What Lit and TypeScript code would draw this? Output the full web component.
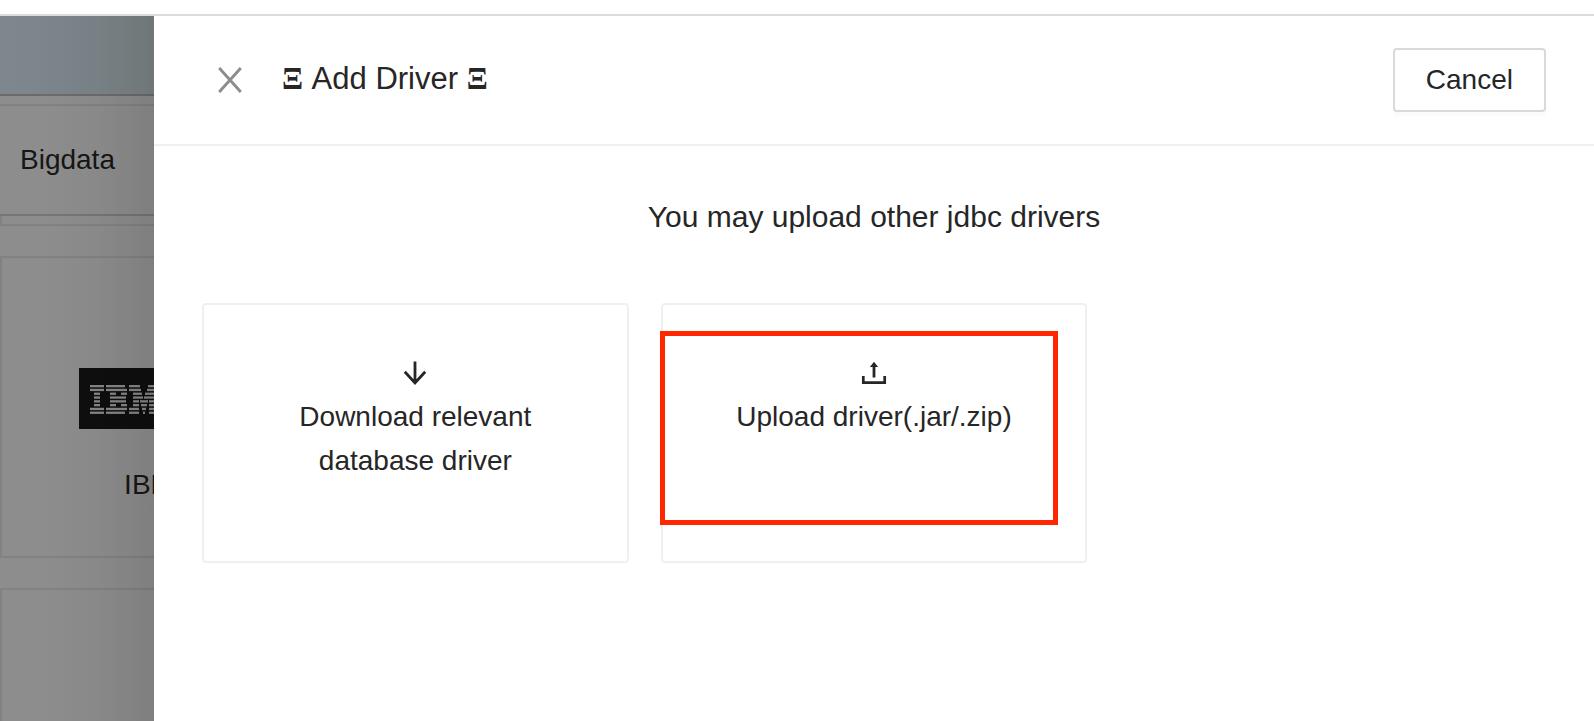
import { LitElement, html, css, svg } from "lit";
import { customElement } from "lit/decorators.js";

const closeIcon = html`<svg class="icon close-icon" viewBox="0 0 24 26" aria-hidden="true">
  <path d="M1.2 1 22.8 25M22.8 1 1.2 25" fill="none" stroke="currentColor" stroke-width="2.9" />
</svg>`;

const downloadIcon = html`<svg class="icon" viewBox="0 0 28 28" aria-hidden="true">
  <path d="M14 2.5V23.5M3.8 12.8 14 24 24.2 12.8" fill="none" stroke="currentColor" stroke-width="2.8" />
</svg>`;

const uploadIcon = html`<svg class="icon" viewBox="0 0 28 28" aria-hidden="true">
  <path d="M3.3 17V23.7H24.7V17" fill="none" stroke="currentColor" stroke-width="2.7" />
  <path d="M12.6 8H9.9L14 2.7 18.1 8H15.4V18.6H12.6Z" fill="currentColor" />
</svg>`;

/* Each row is one stripe of the logo: [x, width] of its light segments. */
const stripes: Array<Array<[number, number]>> = [
  [[11, 14], [27, 19], [50, 11], [69, 11]],
  [[11, 14], [27, 21], [50, 12], [68, 12]],
  [[15, 6], [31, 6], [42, 6], [54, 9], [66, 10]],
  [[15, 6], [31, 16], [54, 10], [65, 11]],
  [[15, 6], [31, 16], [54, 6], [61, 8], [70, 6]],
  [[15, 6], [31, 6], [42, 6], [54, 6], [62, 6], [70, 6]],
  [[11, 14], [27, 21], [50, 10], [63, 4], [70, 10]],
  [[11, 14], [27, 19], [50, 10], [64, 2], [70, 10]],
];
const ibmLogo = html`<svg class="logo" viewBox="0 0 140 61" role="img" aria-label="IBM">
  <rect width="140" height="61" fill="#0f0e0f" />
  ${stripes.map((row, i) =>
    row.map(([x, w]) => svg`<rect x=${x} y=${17 + i * 3.8} width=${w} height="2.3" fill="#858785" />`)
  )}
</svg>`;

@customElement("app-root")
export class AppRoot extends LitElement {
  static styles = css`
    :host {
      display: flex;
      flex-direction: column;
      height: 100vh;
      overflow: hidden;
      font: 28px/44px "Liberation Sans", Arial, sans-serif;
      color: #262626;
      background: #fff;
    }
    *, *::before { box-sizing: border-box; }
    .topbar {
      flex: none;
      height: 16px;
      border-bottom: 2px solid #dcdcdc;
    }
    .stage {
      position: relative;
      flex: 1;
      min-height: 0;
      overflow: hidden;
      background: #8d8d8d;
    }
    .page { color: #161616; }
    .banner {
      height: 80px;
      background: linear-gradient(90deg, #7f878e 0, #7b848a 80px, #7b8485 154px);
      border-bottom: 2px solid #6b6b6b;
    }
    .tabs {
      margin-top: 8px;
      padding: 32px 20px;
      border: solid #828282;
      border-width: 2px 0;
      border-bottom-color: #757575;
    }
    .rule {
      height: 10px;
      border: solid #828282;
      border-width: 0 0 2px 2px;
    }
    .list {
      display: grid;
      gap: 30px;
      width: 298px;
      padding-top: 30px;
    }
    .tile {
      display: flex;
      flex-direction: column;
      align-items: center;
      gap: 34px;
      height: 302px;
      padding-top: 110px;
      border: 2px solid #828282;
    }
    .logo { width: 140px; height: 61px; }
    .drawer {
      position: absolute;
      inset: 0 0 0 154px;
      background: #fff;
    }
    .drawer::before {
      content: "";
      position: absolute;
      inset: 0 100% 0 -112px;
      background: linear-gradient(90deg, transparent, rgba(0, 0, 0, 0.03) 50%, rgba(0, 0, 0, 0.1));
    }
    .head {
      display: flex;
      align-items: center;
      padding: 32px 48px;
      border-bottom: 2px solid #f0f0f0;
    }
    button {
      margin: 0;
      font: inherit;
      color: inherit;
      background: none;
      cursor: pointer;
    }
    .icon { display: block; width: 28px; height: 28px; }
    .close {
      margin-right: 24px;
      padding: 16px;
      border: 0;
      color: #8c8c8c;
    }
    .close-icon { width: 24px; height: 26px; }
    .title {
      flex: 1;
      margin: 0;
      padding-bottom: 2px;
      font-size: 31px;
      font-weight: 400;
    }
    .mark { font-family: "Liberation Serif", serif; font-weight: 700; }
    .cancel {
      padding: 8px 31px;
      border: 2px solid #d9d9d9;
      border-radius: 4px;
      box-shadow: 0 4px 0 rgba(0, 0, 0, 0.015);
    }
    .body { padding: 48px; }
    .lead {
      margin: 0 0 64px;
      font-size: 30px;
      line-height: 45px;
      text-align: center;
    }
    .cards {
      display: grid;
      grid-template-columns: repeat(3, 1fr);
      gap: 32px;
    }
    .card {
      position: relative;
      display: flex;
      flex-direction: column;
      align-items: center;
      justify-content: flex-start;
      min-height: 260px;
      padding: 54px 64px;
      border: 2px solid #f0f0f0;
      border-radius: 4px;
    }
    .card .icon { margin-bottom: 8px; }
    .highlight::before {
      content: "";
      position: absolute;
      inset: 26px 27px 36px -3px;
      border: 5px solid #ff2600;
    }
  `;

  render() {
    return html`
      <header class="topbar"></header>
      <div class="stage">
        <div class="page">
          <div class="banner"></div>
          <div class="tabs">Bigdata</div>
          <div class="rule"></div>
          <div class="list">
            <div class="tile">${ibmLogo}<span>IBM</span></div>
            <div class="tile"></div>
          </div>
        </div>
        <section class="drawer" role="dialog" aria-labelledby="title">
          <div class="head">
            <button class="close" aria-label="Close">${closeIcon}</button>
            <h1 class="title" id="title"><span class="mark">Ξ</span> Add Driver <span class="mark">Ξ</span></h1>
            <button class="cancel">Cancel</button>
          </div>
          <div class="body">
            <p class="lead">You may upload other jdbc drivers</p>
            <div class="cards">
              <button class="card">${downloadIcon}<span>Download relevant<br />database driver</span></button>
              <button class="card highlight">${uploadIcon}<span>Upload driver(.jar/.zip)</span></button>
            </div>
          </div>
        </section>
      </div>
    `;
  }
}
